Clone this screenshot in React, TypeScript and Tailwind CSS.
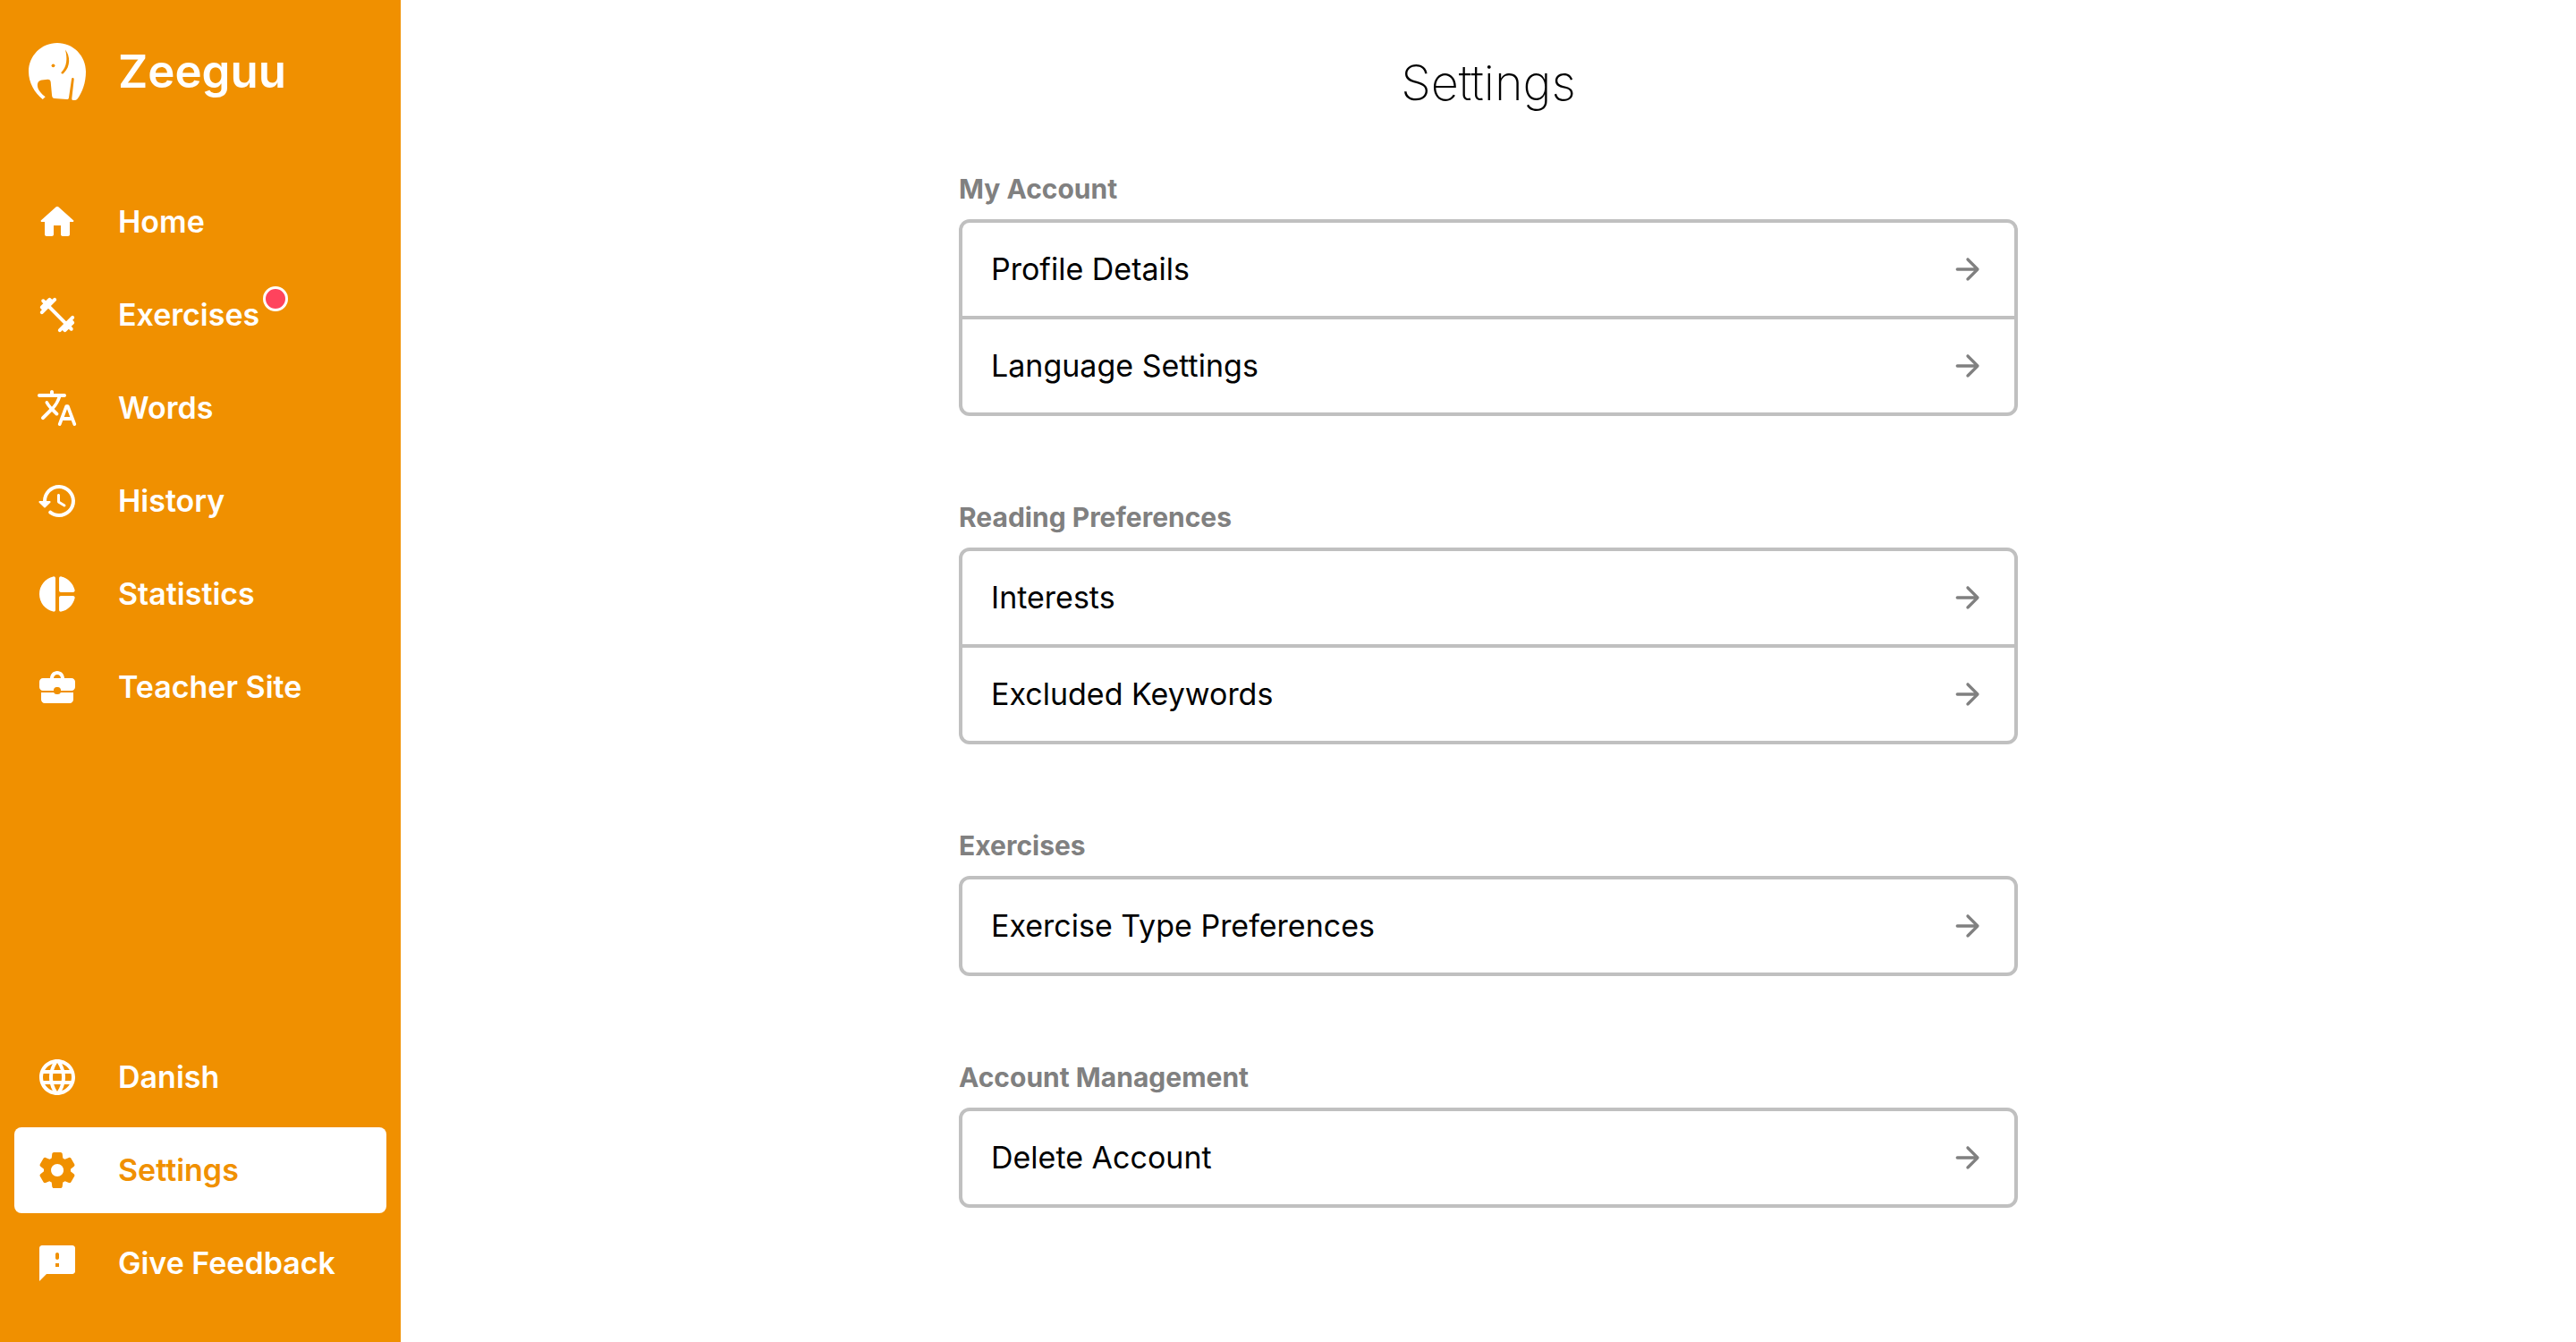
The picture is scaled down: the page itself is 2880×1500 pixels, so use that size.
import React from "react";

const icons = {
  home: "M10 19v-5h4v5c0 .55.45 1 1 1h3c.55 0 1-.45 1-1v-7h1.7c.46 0 .68-.57.33-.87L12.67 3.6c-.38-.34-.96-.34-1.34 0l-8.36 7.53c-.34.3-.13.87.33.87H5v7c0 .55.45 1 1 1h3c.55 0 1-.45 1-1z",
  exercises:
    "M20.57 14.86l.72-.72c.39-.39.39-1.02 0-1.41l-.02-.02c-.39-.39-1.02-.39-1.41 0L17 15.57 8.43 7l2.86-2.86c.39-.39.39-1.02 0-1.41l-.02-.02c-.39-.39-1.02-.39-1.41 0l-.72.72-.72-.72c-.39-.39-1.03-.39-1.42 0L5.57 4.14l-.72-.72c-.39-.39-1.04-.39-1.43 0-.39.39-.39 1.04 0 1.43l.72.72L2.71 7c-.39.39-.39 1.02 0 1.41l.72.72-.72.73c-.39.39-.39 1.02 0 1.41l.02.02c.39.39 1.02.39 1.41 0L7 8.43 15.57 17l-2.85 2.85c-.39.39-.39 1.02 0 1.41l.02.02c.39.39 1.02.39 1.41 0l.72-.72.72.72c.39.39 1.02.39 1.41 0l1.43-1.43.72.72c.39.39 1.04.39 1.43 0 .39-.39.39-1.04 0-1.43l-.72-.72L21.29 17c.39-.39.39-1.02 0-1.41l-.72-.73z",
  words:
    "M12.65 15.67c.14-.36.05-.77-.23-1.05l-2.09-2.06.03-.03c1.74-1.94 2.98-4.17 3.71-6.53h1.94c.54 0 .99-.45.99-.99v-.02c0-.54-.45-.99-.99-.99H10V3c0-.55-.45-1-1-1s-1 .45-1 1v1H1.99c-.54 0-.99.45-.99.99 0 .55.45.99.99.99h10.18C11.5 7.92 10.44 9.75 9 11.35c-.81-.89-1.49-1.86-2.06-2.88-.16-.29-.45-.47-.78-.47-.69 0-1.13.75-.79 1.35.63 1.13 1.4 2.21 2.3 3.21L3.3 16.87c-.4.39-.4 1.03 0 1.42.39.39 1.02.39 1.42 0L9 14l2.02 2.02c.51.51 1.38.32 1.63-.35zM17.5 10c-.6 0-1.14.37-1.35.94l-3.67 9.8c-.24.61.22 1.26.87 1.26.39 0 .74-.24.88-.61l.89-2.39h4.75l.9 2.39c.14.36.49.61.88.61.65 0 1.11-.65.88-1.26l-3.67-9.8c-.22-.57-.76-.94-1.36-.94zm-1.62 7l1.62-4.33L19.12 17h-3.24z",
  history:
    "M13.26 3C8.17 2.86 4 6.95 4 12H2.21c-.45 0-.67.54-.35.85l2.79 2.8c.2.2.51.2.71 0l2.79-2.8c.31-.31.09-.85-.36-.85H6c0-3.9 3.18-7.05 7.1-7 3.72.05 6.85 3.18 6.9 6.9.05 3.91-3.1 7.1-7 7.1-1.61 0-3.1-.55-4.28-1.48-.4-.31-.96-.28-1.32.08-.42.42-.39 1.13.08 1.49C9 20.29 10.91 21 13 21c5.05 0 9.14-4.17 9-9.26-.13-4.69-4.05-8.61-8.74-8.74zm-.51 5c-.41 0-.75.34-.75.75v3.68c0 .35.19.68.49.86l3.12 1.85c.36.21.82.09 1.03-.26.21-.36.09-.82-.26-1.03l-2.88-1.71v-3.4c0-.4-.34-.74-.75-.74z",
  statistics:
    "M11 3.18v17.64c0 .64-.59 1.12-1.21.98C5.32 20.8 2 16.79 2 12s3.32-8.8 7.79-9.8c.62-.14 1.21.34 1.21.98zm2.03 0v6.81c0 .55.45 1 1 1h6.79c.64 0 1.12-.59.98-1.22-.85-3.76-3.8-6.72-7.55-7.57-.63-.14-1.22.34-1.22.98zm0 10.83v6.81c0 .64.59 1.12 1.22.98 3.76-.85 6.71-3.82 7.56-7.58.14-.62-.35-1.22-.98-1.22h-6.79c-.56.01-1.01.46-1.01 1.01z",
  teacher:
    "M12 3C9.8 3 8 4.8 8 7H4c-1.1 0-2 .9-2 2v3c0 1.1.9 2 2 2h6v-.4c0-.9.7-1.6 1.6-1.6h.8c.9 0 1.6.7 1.6 1.6v.4h6c1.1 0 2-.9 2-2V9c0-1.1-.9-2-2-2h-4c0-2.2-1.8-4-4-4zm-2 4c0-1.1.9-2 2-2s2 .9 2 2h-4zM3 15v4c0 1.1.9 2 2 2h14c1.1 0 2-.9 2-2v-4h-7.1c-.2.6-.8 1-1.5 1h-.8c-.7 0-1.3-.4-1.5-1H3z",
  language:
    "M11.99 2C6.47 2 2 6.48 2 12s4.47 10 9.99 10C17.52 22 22 17.52 22 12S17.52 2 11.99 2zm6.93 6h-2.95c-.32-1.25-.78-2.45-1.38-3.56 1.84.63 3.37 1.91 4.33 3.56zM12 4.04c.83 1.2 1.48 2.53 1.91 3.96h-3.82c.43-1.43 1.08-2.76 1.91-3.96zM4.26 14C4.1 13.36 4 12.69 4 12s.1-1.36.26-2h3.38c-.08.66-.14 1.32-.14 2s.06 1.34.14 2H4.26zm.82 2h2.95c.32 1.25.78 2.45 1.38 3.56-1.84-.63-3.37-1.9-4.33-3.56zm2.95-8H5.08c.96-1.66 2.49-2.93 4.33-3.56C8.81 5.55 8.35 6.75 8.03 8zM12 19.96c-.83-1.2-1.48-2.53-1.91-3.96h3.82c-.43 1.43-1.08 2.76-1.91 3.96zM14.34 14H9.66c-.09-.66-.16-1.32-.16-2s.07-1.35.16-2h4.68c.09.65.16 1.32.16 2s-.07 1.34-.16 2zm.25 5.56c.6-1.11 1.06-2.31 1.38-3.56h2.95c-.96 1.65-2.49 2.93-4.33 3.56zM16.36 14c.08-.66.14-1.32.14-2s-.06-1.34-.14-2h3.38c.16.64.26 1.31.26 2s-.1 1.36-.26 2h-3.38z",
  settings:
    "M19.5 12c0-.23-.01-.45-.03-.68l1.86-1.41c.4-.3.51-.86.26-1.3l-1.87-3.23c-.25-.44-.79-.62-1.25-.42l-2.15.91c-.37-.26-.76-.49-1.17-.68l-.29-2.31c-.06-.5-.49-.88-.99-.88h-3.73c-.51 0-.94.38-1 .88l-.29 2.31c-.41.19-.8.42-1.17.68l-2.15-.91c-.46-.2-1-.02-1.25.42L2.41 8.62c-.25.44-.14.99.26 1.3l1.86 1.41c-.02.22-.03.44-.03.67s.01.45.03.68l-1.86 1.41c-.4.3-.51.86-.26 1.3l1.87 3.23c.25.44.79.62 1.25.42l2.15-.91c.37.26.76.49 1.17.68l.29 2.31c.06.5.49.88.99.88h3.73c.5 0 .93-.38.99-.88l.29-2.31c.41-.19.8-.42 1.17-.68l2.15.91c.46.2 1 .02 1.25-.42l1.87-3.23c.25-.44.14-.99-.26-1.3l-1.86-1.41c.03-.23.04-.45.04-.68zm-7.46 3.5c-1.93 0-3.5-1.57-3.5-3.5s1.57-3.5 3.5-3.5 3.5 1.57 3.5 3.5-1.57 3.5-3.5 3.5z",
  feedback:
    "M20.500 2h-17C2.700 2 2 2.700 2 3.500V22l4-4h14.500c.8 0 1.500-.7 1.500-1.500v-13c0-.8-.7-1.500-1.500-1.500zM12 10c-.55 0-1-.45-1-1V7c0-.55.45-1 1-1s1 .45 1 1v2c0 .55-.45 1-1 1zm1 4h-2v-2h2v2z",
  arrow:
    "M5 13h11.17l-4.88 4.88c-.39.39-.39 1.03 0 1.42.39.39 1.02.39 1.41 0l6.59-6.59c.39-.39.39-1.02 0-1.41l-6.58-6.6c-.39-.39-1.02-.39-1.41 0-.39.39-.39 1.02 0 1.41L16.17 11H5c-.55 0-1 .45-1 1s.45 1 1 1z",
};

type IconName = keyof typeof icons;

function Icon({ name, className }: { name: IconName; className: string }) {
  return (
    <svg viewBox="0 0 24 24" fill="currentColor" fillRule="evenodd" aria-hidden="true" className={className}>
      <path d={icons[name]} />
    </svg>
  );
}

function ElephantLogo() {
  return (
    <svg viewBox="0 0 64 64" aria-hidden="true" className="size-16 shrink-0">
      <path
        fill="#fff"
        d="M32 0C14.3 0 0 14.3 0 32c0 12.500 6.500 23.500 15.700 30.900l3-2.700C14.500 57 10.500 53 10 48.500c-.5-4.200 1.500-6.300 4.700-6.900l6.500-.9c2-.2 3.300 1 3.500 3l1.300 14.300c.2 2.600 1 4 3.200 4l13.300 1c1.700.1 2.300-.5 2.500-2l3-20.500c.3-2 2.900-2 2.700.3L48.300 62c-.1 1.400.4 2 1.800 2 2.500 0 3.600-.2 4.900-2C60 55 64 44.500 64 32 64 14.300 49.700 0 32 0z"
      />
      <circle cx="27.500" cy="25.300" r="1.900" fill="#f09000" />
      <path
        fill="#f09000"
        d="M41 7.500c5.300 6.500 6.500 18.500-2 26.500-1.500 1.200-3.200.1-2.400-1.200C43 26 43.500 17.500 41 7.500z"
      />
    </svg>
  );
}

type NavEntry = { label: string; icon: IconName; badge?: boolean; active?: boolean };

const mainNav: NavEntry[] = [
  { label: "Home", icon: "home" },
  { label: "Exercises", icon: "exercises", badge: true },
  { label: "Words", icon: "words" },
  { label: "History", icon: "history" },
  { label: "Statistics", icon: "statistics" },
  { label: "Teacher Site", icon: "teacher" },
];

const bottomNav: NavEntry[] = [
  { label: "Danish", icon: "language" },
  { label: "Settings", icon: "settings", active: true },
  { label: "Give Feedback", icon: "feedback" },
];

function NavItem({ label, icon, badge, active }: NavEntry) {
  return (
    <li>
      <a
        href="#"
        aria-current={active ? "page" : undefined}
        className={
          active
            ? "flex h-24 items-center gap-11 rounded-lg bg-white px-6 text-[#f09000]"
            : "flex h-24 items-center gap-11 rounded-lg px-6 text-white"
        }
      >
        <Icon name={icon} className="size-12 shrink-0" />
        <span className="relative whitespace-nowrap text-[34px] leading-10 font-semibold">
          {label}
          {badge && (
            <span className="absolute -top-3 left-full ml-1 size-7 rounded-full border-3 border-white bg-[#ff435d]" />
          )}
        </span>
      </a>
    </li>
  );
}

const sections = [
  { title: "My Account", items: ["Profile Details", "Language Settings"] },
  { title: "Reading Preferences", items: ["Interests", "Excluded Keywords"] },
  { title: "Exercises", items: ["Exercise Type Preferences"] },
  { title: "Account Management", items: ["Delete Account"] },
];

export default function App() {
  return (
    <div className="flex min-h-screen bg-white font-['Inter',sans-serif] text-black">
      <aside className="flex w-[448px] shrink-0 flex-col bg-[#f09000] px-4 pt-12 pb-10">
        <a href="#" className="flex items-center gap-9 px-4 text-white">
          <ElephantLogo />
          <span className="text-[51px] leading-16 font-semibold">Zeeguu</span>
        </a>
        <nav aria-label="Main" className="mt-22 flex grow flex-col justify-between">
          <ul className="flex flex-col gap-2">
            {mainNav.map((n) => (
              <NavItem key={n.label} {...n} />
            ))}
          </ul>
          <ul className="flex flex-col gap-2">
            {bottomNav.map((n) => (
              <NavItem key={n.label} {...n} />
            ))}
          </ul>
        </nav>
      </aside>
      <main className="grow px-8 pt-16">
        <div className="mx-auto max-w-[1184px]">
          <h1 className="mb-18 text-center text-[54px] leading-[58px] font-extralight">Settings</h1>
          {sections.map((s) => (
            <section key={s.title} className="mb-24">
              <h2 className="mb-4 text-[30px] leading-[35px] font-bold text-[#808080]">{s.title}</h2>
              <ul className="divide-y-4 divide-[#c0c0c0] rounded-xl border-4 border-[#c0c0c0]">
                {s.items.map((item) => (
                  <li key={item}>
                    <a href="#" className="flex h-26 items-center justify-between px-8">
                      <span className="text-[34px] leading-10">{item}</span>
                      <Icon name="arrow" className="size-10 text-[#808080]" />
                    </a>
                  </li>
                ))}
              </ul>
            </section>
          ))}
        </div>
      </main>
    </div>
  );
}
